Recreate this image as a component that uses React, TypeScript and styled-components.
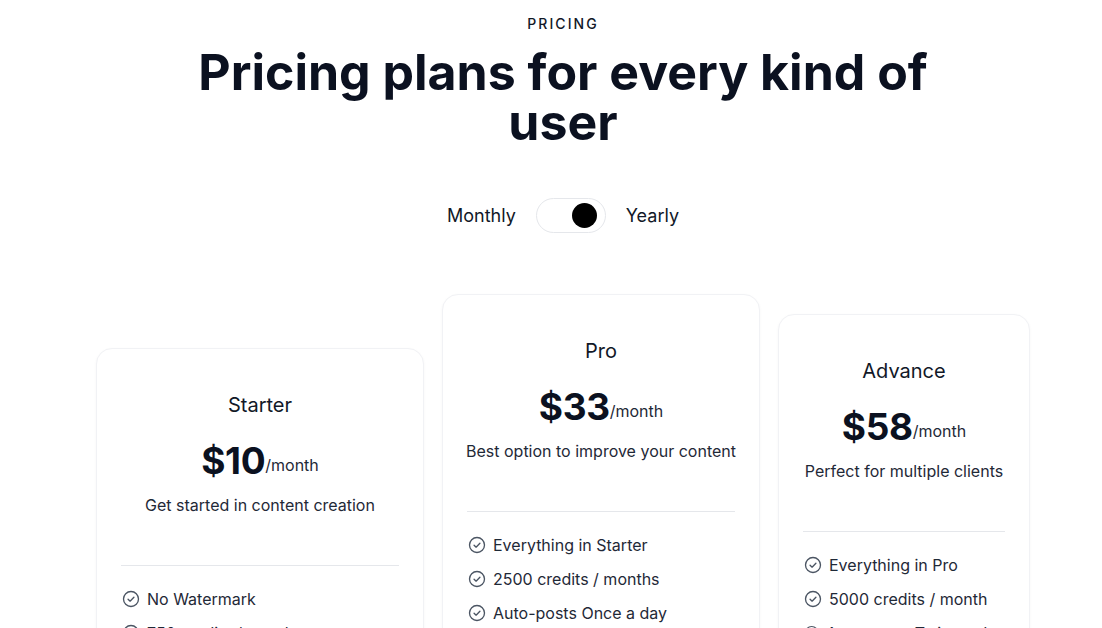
import React, { useState } from "react";
import styled, { createGlobalStyle } from "styled-components";

const GlobalStyle = createGlobalStyle`
  * { box-sizing: border-box; }
  html, body { margin: 0; padding: 0; background: #ffffff; overflow: hidden; }
  body { font-family: Inter, "Noto Sans", "Liberation Sans", sans-serif; color: #111827; }
`;

const Page = styled.main`
  display: flex;
  flex-direction: column;
  align-items: center;
  padding: 14px 0 0 24px;
  width: 100%;
`;

const Eyebrow = styled.p`
  margin: 0;
  font-size: 14px;
  line-height: 20px;
  letter-spacing: 0.15em;
  font-weight: 500;
  color: #111827;
`;

const Title = styled.h1`
  margin: 13px 0 0;
  max-width: 780px;
  text-align: center;
  font-size: 50px;
  line-height: 50px;
  font-weight: 700;
  letter-spacing: 0;
  color: #0b1120;
`;

const ToggleRow = styled.div`
  display: flex;
  align-items: center;
  gap: 20px;
  margin-top: 51px;
  font-size: 18px;
  line-height: 28px;
  color: #111827;
`;

const Switch = styled.button<{ $on: boolean }>`
  position: relative;
  width: 70px;
  height: 35px;
  border-radius: 999px;
  border: 1px solid #e5e7eb;
  background: #ffffff;
  padding: 0;
  cursor: pointer;
`;

const Knob = styled.span<{ $on: boolean }>`
  position: absolute;
  top: 4px;
  left: ${(p) => (p.$on ? "35px" : "5px")};
  width: 25px;
  height: 25px;
  border-radius: 50%;
  background: #000000;
  transition: left 0.2s;
`;

const Cards = styled.div`
  display: flex;
  justify-content: center;
  align-items: flex-start;
  gap: 18px;
  margin-top: 61px;
`;

const Card = styled.article<{ $width: number; $offset: number }>`
  width: ${(p) => p.$width}px;
  margin-top: ${(p) => p.$offset}px;
  background: #ffffff;
  border: 1px solid #f1f2f5;
  border-radius: 16px;
  box-shadow: 0 1px 3px rgba(17, 24, 39, 0.04);
  padding: 40px 24px 40px;
  display: flex;
  flex-direction: column;
  align-items: center;
`;

const PlanName = styled.h2`
  margin: 0;
  font-size: 20px;
  line-height: 32px;
  font-weight: 400;
  color: #111827;
`;

const PriceRow = styled.div`
  margin-top: 20px;
  display: flex;
  align-items: baseline;
  height: 40px;
`;

const Amount = styled.span`
  font-size: 37px;
  line-height: 40px;
  font-weight: 700;
  color: #0b1120;
  letter-spacing: -0.01em;
`;

const Per = styled.span`
  position: relative;
  top: -3px;
  font-size: 16px;
  color: #1f2937;
`;

const Description = styled.p`
  margin: 12px 0 0;
  font-size: 16px;
  line-height: 24px;
  color: #1f2937;
  text-align: center;
  white-space: nowrap;
`;

const Divider = styled.hr`
  width: 100%;
  margin: 48px 0 0;
  border: 0;
  border-top: 1px solid #e5e7eb;
`;

const Features = styled.ul`
  list-style: none;
  margin: 21px 0 0;
  padding: 0;
  width: 100%;
  display: flex;
  flex-direction: column;
  gap: 10px;
`;

const Feature = styled.li`
  display: flex;
  align-items: center;
  gap: 6px;
  font-size: 16px;
  line-height: 24px;
  color: #1f2937;
  white-space: nowrap;
`;

const CheckIcon = () => (
  <svg width="20" height="20" viewBox="0 0 24 24" fill="none" stroke="#4b5563" strokeWidth="1.6" strokeLinecap="round" strokeLinejoin="round">
    <circle cx="12" cy="12" r="9" />
    <path d="m8.5 12.2 2.4 2.4 4.6-4.8" />
  </svg>
);

const plans = [
  {
    name: "Starter",
    price: "$10",
    desc: "Get started in content creation",
    width: 328,
    offset: 54,
    features: ["No Watermark", "750 credits / month", "Auto-posts Once a week", "Unlimited projects"],
  },
  {
    name: "Pro",
    price: "$33",
    desc: "Best option to improve your content",
    width: 318,
    offset: 0,
    features: ["Everything in Starter", "2500 credits / months", "Auto-posts Once a day", "Priority support"],
  },
  {
    name: "Advance",
    price: "$58",
    desc: "Perfect for multiple clients",
    width: 252,
    offset: 20,
    features: ["Everything in Pro", "5000 credits / month", "Auto-posts Twice a day", "Dedicated support"],
  },
];

export default function App() {
  const [yearly, setYearly] = useState(true);
  return (
    <>
      <GlobalStyle />
      <Page>
        <Eyebrow>PRICING</Eyebrow>
        <Title>Pricing plans for every kind of user</Title>
        <ToggleRow>
          <span>Monthly</span>
          <Switch $on={yearly} onClick={() => setYearly(!yearly)} aria-label="Toggle billing">
            <Knob $on={yearly} />
          </Switch>
          <span>Yearly</span>
        </ToggleRow>
        <Cards>
          {plans.map((p) => (
            <Card key={p.name} $width={p.width} $offset={p.offset}>
              <PlanName>{p.name}</PlanName>
              <PriceRow>
                <Amount>{p.price}</Amount>
                <Per>/month</Per>
              </PriceRow>
              <Description>{p.desc}</Description>
              <Divider />
              <Features>
                {p.features.map((f) => (
                  <Feature key={f}>
                    <CheckIcon />
                    <span>{f}</span>
                  </Feature>
                ))}
              </Features>
            </Card>
          ))}
        </Cards>
      </Page>
    </>
  );
}
